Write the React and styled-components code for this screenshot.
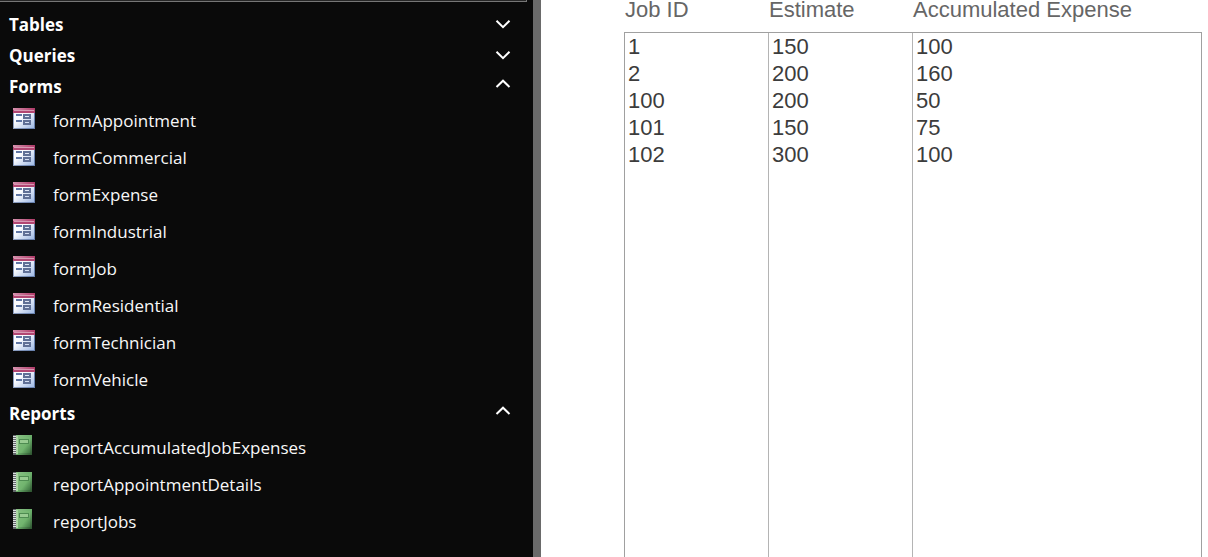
import React, { useState } from 'react';
import styled, { createGlobalStyle } from 'styled-components';

const GlobalStyle = createGlobalStyle`
  *, *::before, *::after { box-sizing: border-box; }
  body { margin: 0; background: #fff; }
`;

const Window = styled.div`
  display: flex;
  height: 100vh;
  overflow: hidden;
`;

const NavPane = styled.nav`
  flex: 0 0 541px;
  background: #0a0a0a;
  border-right: 8px solid #6a6a6a;
  color: #fff;
  font-family: "Segoe UI", "Open Sans", sans-serif;
  font-size: 17px;
`;

const SearchEdge = styled.div`
  height: 2px;
  margin: 0 6px 7px 0;
  background: #262626;
  border-right: 1px solid #767676;
  border-bottom: 1px solid #767676;
`;

const GroupHeader = styled.button`
  display: flex;
  align-items: center;
  justify-content: space-between;
  width: 100%;
  height: 31px;
  padding: 0 22px 0 9px;
  border: 0;
  background: none;
  color: inherit;
  font: inherit;
  font-weight: 700;
  line-height: 24px;
  text-align: left;
  cursor: pointer;
`;

const ItemList = styled.ul`
  margin: 0;
  padding: 0;
  list-style: none;
`;

const Item = styled.button`
  display: flex;
  align-items: center;
  gap: 16px;
  width: 100%;
  height: 37px;
  padding: 0 13px;
  border: 0;
  background: none;
  color: #f8f8f8;
  font: inherit;
  line-height: 24px;
  text-align: left;
  cursor: pointer;
`;

const Icon = styled.svg`
  flex: none;
  display: block;
`;

const Content = styled.main`
  flex: 1;
  min-width: 0;
  padding: 0 6px 0 83px;
`;

const Listing = styled.table`
  width: 100%;
  height: 100%;
  table-layout: fixed;
  border-collapse: separate;
  border-spacing: 0;
  font-family: "Liberation Sans", Arial, sans-serif;
  font-size: 22px;
`;

const Column = styled.col`
  width: ${(p) => (p.$wide ? 'auto' : '144px')};
`;

const HeadCell = styled.th`
  height: 33px;
  padding: 0 0 12px 1px;
  border-bottom: 1px solid #a0a0a0;
  color: #666;
  font-weight: 400;
  line-height: 20px;
  text-align: left;
  white-space: nowrap;
`;

const Cell = styled.td`
  height: 27px;
  padding: 0 3px;
  border-left: 1px solid #b4b4b4;
  color: #3c3c3c;
  line-height: 27px;
  vertical-align: top;

  &:first-child { border-left-color: #a0a0a0; }
  &:last-child { border-right: 1px solid #a0a0a0; }
  tr:last-child > & { height: 100%; }
`;

function Chevron({ up }) {
  return (
    <Icon width="16" height="16" viewBox="0 0 16 16" fill="none" stroke="#fff" strokeWidth="2" aria-hidden="true">
      <path d={up ? 'M1.5 8 L8 1.7 L14.5 8' : 'M1.5 3.8 L8 10.1 L14.5 3.8'} />
    </Icon>
  );
}

function FormIcon() {
  return (
    <Icon width="24" height="25" viewBox="0 0 24 25" aria-hidden="true" shapeRendering="crispEdges">
      <defs>
        <linearGradient id="formBar" x1="0" x2="1">
          <stop offset="0" stopColor="#d592ae" />
          <stop offset="1" stopColor="#b03a68" />
        </linearGradient>
        <linearGradient id="formPage" x1="0" y1="0" x2="1" y2="1">
          <stop offset="0.35" stopColor="#fbfcff" />
          <stop offset="1" stopColor="#9fb9e4" />
        </linearGradient>
        <linearGradient id="formEdge" x1="0" x2="1">
          <stop offset="0" stopColor="#8e9fc0" />
          <stop offset="1" stopColor="#6680ae" />
        </linearGradient>
      </defs>
      <rect width="22" height="21" fill="url(#formEdge)" />
      <rect x="1" y="4" width="20" height="16" fill="url(#formPage)" />
      <rect width="22" height="5" fill="#b24672" />
      <rect width="22" height="2" fill="url(#formBar)" />
      <rect x="1" y="2" width="20" height="1" fill="#d79ab3" />
      <rect x="3" y="6" width="6" height="2" fill="#6077a5" />
      <rect x="3" y="12" width="6" height="2" fill="#6077a5" />
      <rect x="10" y="6" width="8" height="5" fill="#607096" />
      <rect x="12" y="8" width="4" height="1" fill="#e0e7f6" />
      <rect x="10" y="12" width="8" height="5" fill="#607096" />
      <rect x="12" y="14" width="4" height="1" fill="#d3def3" />
    </Icon>
  );
}

function ReportIcon() {
  return (
    <Icon width="24" height="25" viewBox="0 0 24 25" aria-hidden="true" shapeRendering="crispEdges">
      <defs>
        <linearGradient id="bookCover" x1="0" y1="0" x2="1" y2="1">
          <stop offset="0" stopColor="#8fc48a" />
          <stop offset="0.55" stopColor="#69ad69" />
          <stop offset="1" stopColor="#2b4f2d" />
        </linearGradient>
        <linearGradient id="bookFace" x1="0" y1="0" x2="1" y2="1">
          <stop offset="0" stopColor="#84c07f" />
          <stop offset="0.6" stopColor="#71b46e" />
          <stop offset="1" stopColor="#3f7743" />
        </linearGradient>
      </defs>
      <rect x="2" width="17" height="20" fill="url(#bookCover)" />
      <rect x="3" y="1" width="2" height="18" fill="#a9d6a2" />
      <rect x="5" y="2" width="12" height="16" fill="url(#bookFace)" />
      <rect x="6" y="4" width="10" height="5" fill="#4e8b51" />
      <rect x="7" y="5" width="8" height="3" fill="#98cb91" />
      <rect width="3" height="20" fill="#62666a" />
      {[1, 3, 5, 7, 9, 11, 13, 15, 17].map((y) => (
        <rect key={y} y={y} width="3" height="1" fill="#dcdfe0" />
      ))}
    </Icon>
  );
}

const groups = [
  { name: 'Tables', items: [] },
  { name: 'Queries', items: [] },
  {
    name: 'Forms',
    icon: FormIcon,
    items: [
      'formAppointment', 'formCommercial', 'formExpense', 'formIndustrial',
      'formJob', 'formResidential', 'formTechnician', 'formVehicle',
    ],
  },
  {
    name: 'Reports',
    icon: ReportIcon,
    items: ['reportAccumulatedJobExpenses', 'reportAppointmentDetails', 'reportJobs'],
  },
];

const jobs = [
  [1, 150, 100],
  [2, 200, 160],
  [100, 200, 50],
  [101, 150, 75],
  [102, 300, 100],
];

function NavGroup({ name, items, icon: ItemIcon }) {
  const [open, setOpen] = useState(items.length > 0);
  return (
    <section>
      <GroupHeader type="button" aria-expanded={open} onClick={() => setOpen(!open)}>
        {name}
        <Chevron up={open} />
      </GroupHeader>
      {open && (
        <ItemList>
          {items.map((item) => (
            <li key={item}>
              <Item type="button">
                <ItemIcon />
                {item}
              </Item>
            </li>
          ))}
        </ItemList>
      )}
    </section>
  );
}

export default function App() {
  return (
    <Window>
      <GlobalStyle />
      <NavPane aria-label="Database objects">
        <SearchEdge />
        {groups.map((group) => (
          <NavGroup key={group.name} {...group} />
        ))}
      </NavPane>
      <Content>
        <Listing>
          <colgroup>
            <Column />
            <Column />
            <Column $wide />
          </colgroup>
          <thead>
            <tr>
              <HeadCell scope="col">Job ID</HeadCell>
              <HeadCell scope="col">Estimate</HeadCell>
              <HeadCell scope="col">Accumulated Expense</HeadCell>
            </tr>
          </thead>
          <tbody>
            {jobs.map((job) => (
              <tr key={job[0]}>
                {job.map((value, i) => (
                  <Cell key={i}>{value}</Cell>
                ))}
              </tr>
            ))}
          </tbody>
        </Listing>
      </Content>
    </Window>
  );
}
